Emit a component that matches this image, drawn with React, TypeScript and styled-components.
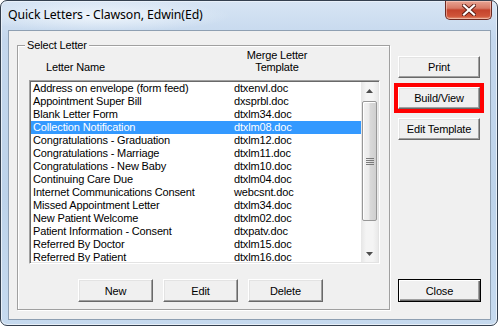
import React, { useState } from 'react';
import styled, { createGlobalStyle } from 'styled-components';

const GlobalStyle = createGlobalStyle`
    html, body {
        margin: 0;
        padding: 0;
        background: #ffffff;
    }
    * {
        box-sizing: border-box;
    }
`;

const Window = styled.div`
    width: 498px;
    height: 326px;
    display: flex;
    flex-direction: column;
    border: 1px solid #34404f;
    border-radius: 7px;
    background: linear-gradient(to bottom, #d7e5f4 0%, #c4d7ed 12%, #bdd3ea 60%, #c6daef 100%);
    box-shadow: inset 0 0 0 1px #e8f0f9;
    overflow: hidden;
`;

const TitleBar = styled.div`
    height: 29px;
    display: flex;
    align-items: flex-start;
    padding-left: 7px;
    background: radial-gradient(ellipse 130px 16px at 100px 15px, rgba(240, 246, 252, 0.95), rgba(240, 246, 252, 0) 100%);
`;

const Title = styled.div`
    font-family: 'Noto Sans', 'Open Sans', sans-serif;
    font-size: 12.3px;
    line-height: 14px;
    margin-top: 7px;
    color: #000;
    letter-spacing: -0.1px;
`;

const CloseBox = styled.div`
    margin-left: auto;
    margin-right: 5px;
    width: 47px;
    height: 19px;
    display: flex;
    align-items: center;
    justify-content: center;
    border: 1px solid #6d2a22;
    border-top: none;
    border-radius: 0 0 5px 5px;
    background: linear-gradient(to bottom, #e8a493 0%, #d77a66 40%, #c4432c 50%, #d0553a 85%, #e59a7c 100%);
    box-shadow: inset 0 0 0 1px rgba(255, 220, 210, 0.5);
`;

const Client = styled.div`
    flex: 1;
    margin: 0 6px 5px 7px;
    border: 1px solid #8e9fb2;
    background: #f0f0f0;
    display: flex;
    padding: 14px 0 0 8px;
    font-family: 'Liberation Sans', Arial, sans-serif;
    font-size: 11px;
    letter-spacing: -0.15px;
    color: #000;
`;

const Group = styled.div`
    position: relative;
    width: 373px;
    height: 265px;
    border: 1px solid #a0a0a0;
    box-shadow: 1px 1px 0 #ffffff, inset 1px 1px 0 #ffffff;
    display: flex;
    flex-direction: column;
    padding: 0 9px 0 11px;
`;

const Legend = styled.span`
    position: absolute;
    left: 7px;
    top: -8px;
    padding: 0 2px;
    line-height: 14px;
    background: #f0f0f0;
`;

const HeaderRow = styled.div`
    height: 34px;
    display: flex;
    align-items: flex-end;
    padding-bottom: 7px;
    line-height: 12px;
`;

const HeaderName = styled.div`
    width: 205px;
    padding-left: 17px;
`;

const HeaderTemplate = styled.div`
    width: 86px;
    text-align: center;
`;

const ListBox = styled.div`
    height: 184px;
    display: flex;
    background: #ffffff;
    border: 1px solid;
    border-color: #a0a0a0 #ffffff #ffffff #a0a0a0;
    box-shadow: inset 1px 1px 0 #696969, inset -1px -1px 0 #e3e3e3;
    padding: 1px;
    overflow: hidden;
`;

const Rows = styled.div`
    flex: 1;
    overflow: hidden;
`;

const Row = styled.div<{ $selected: boolean }>`
    height: 13px;
    line-height: 13px;
    display: flex;
    white-space: nowrap;
    cursor: default;
    background: ${p => (p.$selected ? '#3399ff' : 'transparent')};
    color: ${p => (p.$selected ? '#ffffff' : '#000000')};
`;

const NameCell = styled.div`
    width: 203px;
    padding-left: 2px;
    overflow: hidden;
`;

const FileCell = styled.div`
    flex: 1;
`;

const ScrollBar = styled.div`
    width: 17px;
    display: flex;
    flex-direction: column;
    background: linear-gradient(to right, #e6e6e6, #f4f4f4 30%, #f4f4f4 70%, #e9e9e9);
`;

const Arrow = styled.div`
    height: 17px;
    display: flex;
    align-items: center;
    justify-content: center;
`;

const Thumb = styled.div`
    height: 120px;
    margin: 2px 1px 0 1px;
    border: 1px solid #979797;
    border-radius: 2px;
    background: linear-gradient(to right, #f2f2f2, #ebebeb 45%, #d9d9d9 55%, #cfcfcf);
    box-shadow: inset 1px 1px 0 #ffffff;
    display: flex;
    align-items: center;
    justify-content: center;
`;

const Track = styled.div`
    flex: 1;
`;

const BottomButtons = styled.div`
    display: flex;
    gap: 10px;
    margin-top: 15px;
    padding-left: 49px;
`;

const Button = styled.button<{ $w: number; $h: number; $default?: boolean; $marked?: boolean }>`
    width: ${p => p.$w}px;
    height: ${p => p.$h}px;
    padding: 0;
    font-family: 'Liberation Sans', Arial, sans-serif;
    font-size: 11px;
    letter-spacing: -0.15px;
    color: #000;
    background: #f0f0f0;
    border: 1px solid;
    border-color: ${p => (p.$default ? '#000000' : '#ffffff #696969 #696969 #ffffff')};
    box-shadow: ${p =>
        p.$default
            ? 'inset 1px 1px 0 #ffffff, inset -1px -1px 0 #696969, inset -2px -2px 0 #a0a0a0'
            : 'inset -1px -1px 0 #a0a0a0, inset 1px 1px 0 #e3e3e3'};
    outline: ${p => (p.$marked ? '4px solid #ff0000' : 'none')};
    outline-offset: 0;
    cursor: default;
`;

const SideColumn = styled.div`
    display: flex;
    flex-direction: column;
    gap: 9px;
    margin-left: 8px;
    padding: 11px 0 8px 0;
    height: 265px;
`;

const CloseSlot = styled.div`
    margin-top: auto;
`;

const letters = [
    ['Address on envelope (form feed)', 'dtxenvl.doc'],
    ['Appointment Super Bill', 'dxsprbl.doc'],
    ['Blank Letter Form', 'dtxlm34.doc'],
    ['Collection Notification', 'dtxlm08.doc'],
    ['Congratulations - Graduation', 'dtxlm12.doc'],
    ['Congratulations - Marriage', 'dtxlm11.doc'],
    ['Congratulations - New Baby', 'dtxlm10.doc'],
    ['Continuing Care Due', 'dtxlm04.doc'],
    ['Internet Communications Consent', 'webcsnt.doc'],
    ['Missed Appointment Letter', 'dtxlm34.doc'],
    ['New Patient Welcome', 'dtxlm02.doc'],
    ['Patient Information - Consent', 'dtxpatv.doc'],
    ['Referred By Doctor', 'dtxlm15.doc'],
    ['Referred By Patient', 'dtxlm16.doc'],
];

const App = () => {
    const [selected, setSelected] = useState<number>(3);

    return (
        <>
            <GlobalStyle />
            <Window>
                <TitleBar>
                    <Title>Quick Letters - Clawson, Edwin(Ed)</Title>
                    <CloseBox>
                        <svg width="14" height="12" viewBox="0 0 14 12">
                            <path d="M2 1.5 L12 10.5 M12 1.5 L2 10.5" stroke="#5a1c14" strokeWidth="4" strokeLinecap="square" />
                            <path d="M2 1.5 L12 10.5 M12 1.5 L2 10.5" stroke="#ffffff" strokeWidth="2.2" strokeLinecap="square" />
                        </svg>
                    </CloseBox>
                </TitleBar>
                <Client>
                    <Group>
                        <Legend>Select Letter</Legend>
                        <HeaderRow>
                            <HeaderName>Letter Name</HeaderName>
                            <HeaderTemplate>Merge Letter<br />Template</HeaderTemplate>
                        </HeaderRow>
                        <ListBox>
                            <Rows>
                                {letters.map(([name, file], idx) => (
                                    <Row key={idx} $selected={idx === selected} onClick={() => setSelected(idx)}>
                                        <NameCell>{name}</NameCell>
                                        <FileCell>{file}</FileCell>
                                    </Row>
                                ))}
                            </Rows>
                            <ScrollBar>
                                <Arrow>
                                    <svg width="7" height="4" viewBox="0 0 7 4"><path d="M0 4 L3.5 0 L7 4 Z" fill="#4d4d4d" /></svg>
                                </Arrow>
                                <Thumb>
                                    <svg width="8" height="7" viewBox="0 0 8 7">
                                        <path d="M0 0.5 H8 M0 2.5 H8 M0 4.5 H8 M0 6.5 H8" stroke="#7a7a7a" strokeWidth="1" />
                                    </svg>
                                </Thumb>
                                <Track />
                                <Arrow>
                                    <svg width="7" height="4" viewBox="0 0 7 4"><path d="M0 0 L7 0 L3.5 4 Z" fill="#4d4d4d" /></svg>
                                </Arrow>
                            </ScrollBar>
                        </ListBox>
                        <BottomButtons>
                            <Button $w={75} $h={23}>New</Button>
                            <Button $w={75} $h={23}>Edit</Button>
                            <Button $w={75} $h={23}>Delete</Button>
                        </BottomButtons>
                    </Group>
                    <SideColumn>
                        <Button $w={82} $h={22}>Print</Button>
                        <Button $w={82} $h={22} $marked>Build/View</Button>
                        <Button $w={82} $h={22}>Edit Template</Button>
                        <CloseSlot>
                            <Button $w={83} $h={23} $default>Close</Button>
                        </CloseSlot>
                    </SideColumn>
                </Client>
            </Window>
        </>
    );
};

export default App;
